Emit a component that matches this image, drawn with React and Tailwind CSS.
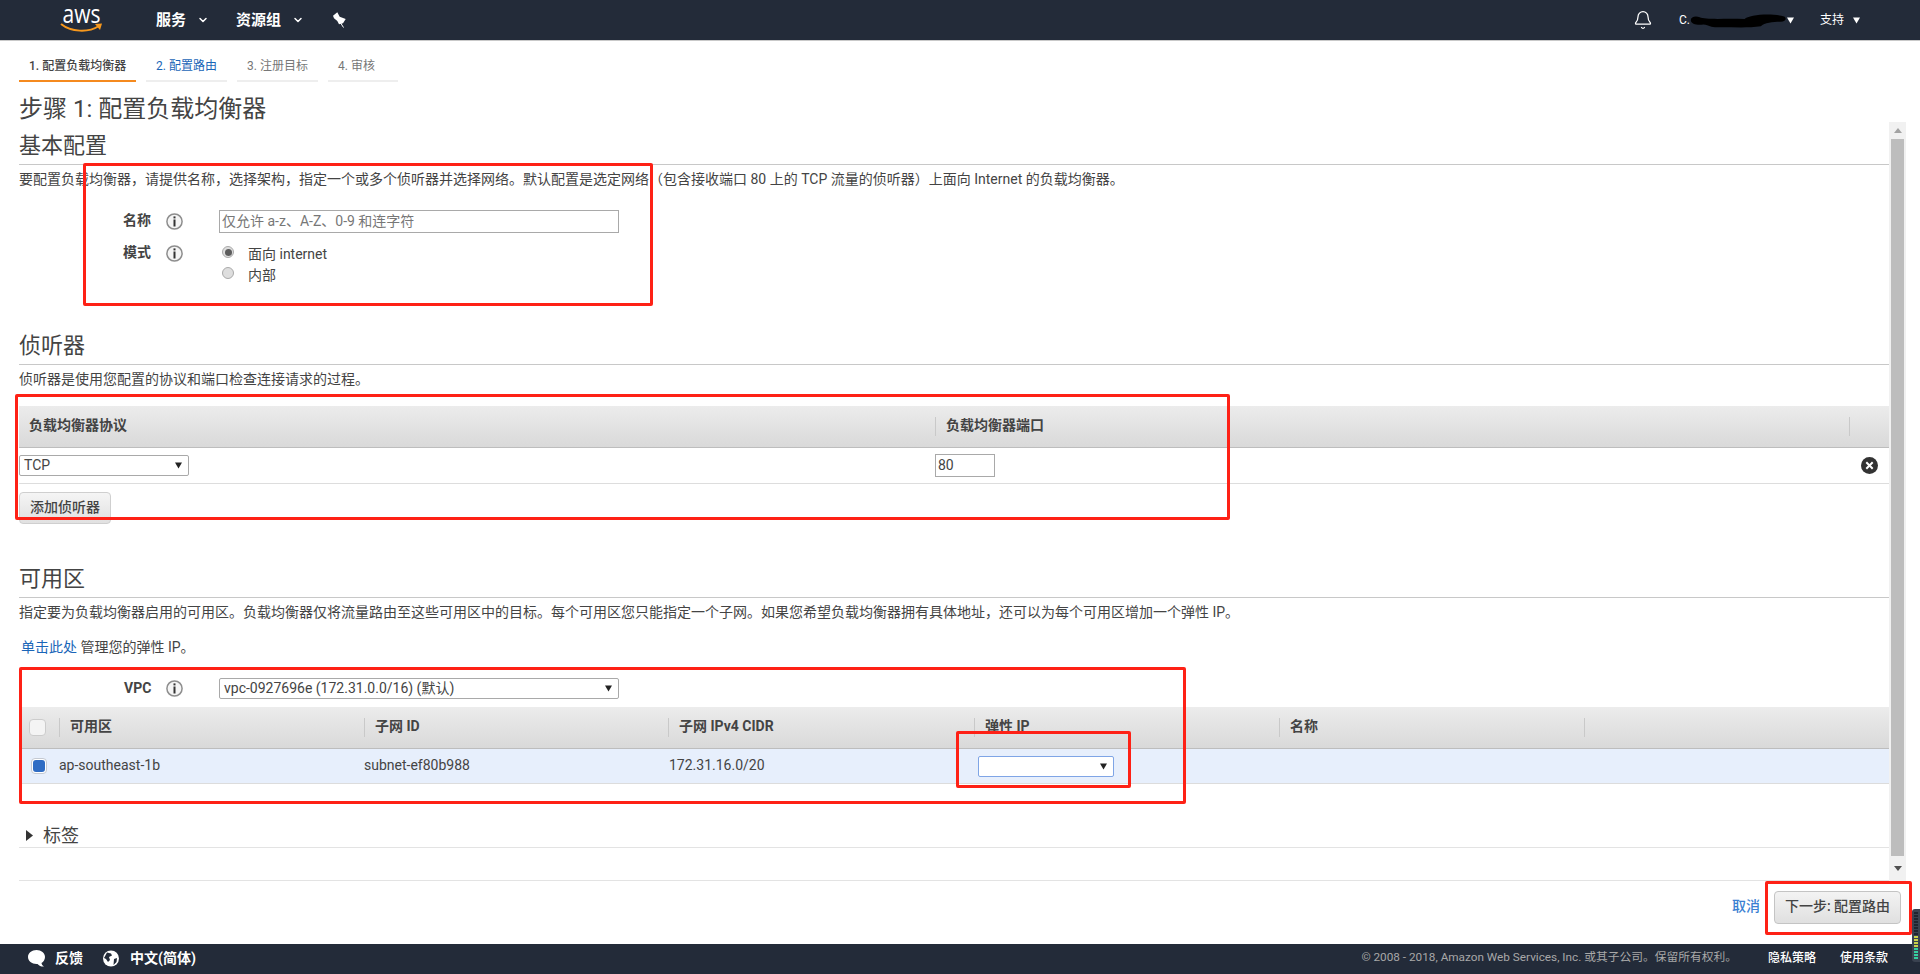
import React from 'react';
import { Bell, ChevronDown } from 'lucide-react';

const Caret = ({ className = '' }) => (
    <svg viewBox="0 0 8 7" className={`w-[7px] h-[7px] ${className}`}>
        <path d="M0 0h8L4 7z" fill="currentColor" />
    </svg>
);

const InfoIcon = () => (
    <svg viewBox="0 0 17 17" className="w-[17px] h-[17px] shrink-0">
        <circle cx="8.5" cy="8.5" r="7.6" fill="#f5f5f5" stroke="#8e8e8e" strokeWidth="1.5" />
        <rect x="7.5" y="3.4" width="2" height="2" fill="#333" />
        <rect x="7.5" y="6.5" width="2" height="7" fill="#333" />
    </svg>
);

const RemoveIcon = () => (
    <svg viewBox="0 0 17 17" className="w-[17px] h-[17px]">
        <circle cx="8.5" cy="8.5" r="8.5" fill="#333" />
        <path d="M5.3 5.3l6.4 6.4M11.7 5.3l-6.4 6.4" stroke="#fff" strokeWidth="2" />
    </svg>
);

const Radio = ({ checked }) => (
    <span className="-mt-[3px] w-[12px] h-[12px] rounded-full border border-[#aaaaaa] bg-[#dedede] flex items-center justify-center shrink-0">
        {checked && <span className="w-[7px] h-[7px] rounded-full bg-[#5c5c5c]" />}
    </span>
);

const Select = ({ className, children }) => (
    <div className={`flex items-center justify-between bg-white border border-[#a9a9a9] rounded-[2px] text-[14px] ${className}`}>
        <span>{children}</span>
        <Caret className="text-[#222] mr-[6px]" />
    </div>
);

const Sep = () => <span className="w-px h-[19px] bg-[#c9c9c9] shrink-0" />;

const HeadCell = ({ className, children }) => (
    <div className={`flex items-center gap-[10px] font-bold text-[14px] text-[#444] ${className}`}>
        {children}
    </div>
);

const HeadText = ({ children }) => <span className="-mt-[2px]">{children}</span>;

const SectionTitle = ({ className, children }) => (
    <h2 className={`text-[22px] leading-[30px] pb-[3px] border-b border-[#c8c8c8] text-[#444] ${className}`}>{children}</h2>
);

const Para = ({ className = '', children }) => (
    <p className={`mt-[4px] mb-[1px] text-[14px] leading-[20px] ${className}`}>{children}</p>
);

const steps = [
    { label: '1. 配置负载均衡器', w: 'w-[117px]', cls: 'border-[#f58a1f] text-[#444] font-medium' },
    { label: '2. 配置路由', w: 'w-[81px]', cls: 'border-[#eeeeee] text-[#1a66b8]' },
    { label: '3. 注册目标', w: 'w-[81px]', cls: 'border-[#eeeeee] text-[#777]' },
    { label: '4. 审核', w: 'w-[70px]', cls: 'border-[#eeeeee] text-[#777]' },
];

// red annotation boxes drawn over the screenshot
const marks = [
    'left-[83px] top-[163px] w-[570px] h-[143px]',
    'left-[15px] top-[394px] w-[1215px] h-[126px]',
    'left-[19px] top-[667px] w-[1167px] h-[137px]',
    'left-[956px] top-[731px] w-[175px] h-[57px]',
    'left-[1765px] top-[881px] w-[147px] h-[54px]',
];

const meter = [
    ...Array(8).fill('bg-[#1f2530]'),
    ...Array(4).fill('bg-[#c9d24a]'),
    ...Array(4).fill('bg-[#35cfa0]'),
];

export default function App() {
    return (
        <div className="relative h-[974px] overflow-hidden flex flex-col bg-white text-[#444] [font-family:Roboto,'Noto_Sans_CJK_SC',sans-serif]">
            {/* top bar */}
            <nav className="h-[41px] shrink-0 bg-[#232b39] border-b border-[#c9c9c9] flex items-center text-white">
                <div className="ml-[60px] w-[43px] h-[26px] flex flex-col items-center">
                    <span className="-mt-[4px] text-[21px] leading-[20px] scale-y-125 [font-family:'Open_Sans',sans-serif]">aws</span>
                    <svg viewBox="0 0 43 10" className="w-[43px] h-[10px]">
                        <path d="M1 1C11 9 28 10 39 3" fill="none" stroke="#f7981d" strokeWidth="2" />
                        <path d="M35 1l7-.5-2 6.500z" fill="#f7981d" />
                    </svg>
                </div>
                <span className="ml-[53px] text-[15px] font-bold">服务</span>
                <ChevronDown className="ml-[11px] w-[12px] h-[12px]" strokeWidth={3} />
                <span className="ml-[27px] text-[15px] font-bold">资源组</span>
                <ChevronDown className="ml-[11px] w-[12px] h-[12px]" strokeWidth={3} />
                <svg viewBox="13 7 15 16" className="ml-[28px] w-[15px] h-[16px]">
                    <path d="M14 10.700L18.300 7.300 20.700 11.700 26.700 14 24 18.300 20 19.300 18.300 16 15 13.300z" fill="#fff" />
                    <path d="M21 17l3.500 5.500" stroke="#fff" strokeWidth="1" />
                </svg>
                <Bell className="ml-auto w-[20px] h-[20px]" strokeWidth={1.5} />
                <span className="ml-[26px] w-[10px] text-[12px] text-white">C.</span>
                <svg viewBox="0 0 108 16" className="w-[97px] h-[16px]">
                    <path d="M2 8c0-4 6-5 10-3 6 3 30 1 50 2 4-5 30-7 44-3 3 2 2 6-4 6-8 0-18 1-22 5-14 2-30 1-44 1-12 1-12-2-20-3-6 1-14 0-14-5z" fill="#000" />
                </svg>
                <Caret className="ml-[1px]" />
                <span className="ml-[26px] text-[12px]">支持</span>
                <Caret className="ml-[9px] mr-[60px]" />
            </nav>

            {/* wizard steps */}
            <div className="mt-[11px] ml-[19px] flex gap-[10px] h-[30px] shrink-0">
                {steps.map((s) => (
                    <div key={s.label} className={`${s.w} ${s.cls} border-b-2 pl-[10px] text-[12px] leading-[28px]`}>{s.label}</div>
                ))}
            </div>

            <h1 className="mt-[14px] ml-[19px] h-[26px] shrink-0 text-[24px] leading-[26px] text-[#444]">步骤 1: 配置负载均衡器</h1>

            <div className="h-[759px] shrink-0 flex">
                <main className="flex-1 ml-[19px] border-b border-[#e3e3e3] flex flex-col">
                    {/* basic config */}
                    <SectionTitle className="mt-[9px]">基本配置</SectionTitle>
                    <Para>要配置负载均衡器，请提供名称，选择架构，指定一个或多个侦听器并选择网络。默认配置是选定网络（包含接收端口 80 上的 TCP 流量的侦听器）上面向 Internet 的负载均衡器。</Para>
                    <div className="mt-[20px] h-[23px] flex items-center">
                        <span className="ml-[104px] w-[43px] -mt-[2px] font-bold text-[14px]">名称</span>
                        <InfoIcon />
                        <input
                            placeholder="仅允许 a-z、A-Z、0-9 和连字符"
                            className="ml-[36px] w-[400px] h-[23px] border border-[#a9a9a9] px-[2px] pb-[2px] text-[14px] placeholder:text-[#777] outline-none"
                        />
                    </div>
                    <div className="mt-[10px] flex">
                        <span className="ml-[104px] w-[43px] h-[19px] flex items-center font-bold text-[14px]">模式</span>
                        <div className="h-[21px] flex items-center"><InfoIcon /></div>
                        <div className="ml-[39px] flex flex-col">
                            <label className="h-[21px] flex items-center gap-[14px] text-[14px]"><Radio checked /><span className="mt-[2px]">面向 internet</span></label>
                            <label className="h-[21px] flex items-center gap-[14px] text-[14px]"><Radio /><span className="mt-[2px]">内部</span></label>
                        </div>
                    </div>

                    {/* listeners */}
                    <SectionTitle className="mt-[46px]">侦听器</SectionTitle>
                    <Para>侦听器是使用您配置的协议和端口检查连接请求的过程。</Para>
                    <div className="mt-[16px] h-[42px] flex border-b border-[#bdbdbd] bg-gradient-to-b from-[#ececec] to-[#d9d9d9]">
                        <HeadCell className="w-[916px] pl-[10px]"><HeadText>负载均衡器协议</HeadText></HeadCell>
                        <HeadCell className="w-[914px]"><Sep /><HeadText>负载均衡器端口</HeadText></HeadCell>
                        <HeadCell className="flex-1"><Sep /></HeadCell>
                    </div>
                    <div className="h-[36px] flex items-center border-b border-[#dddddd]">
                        <Select className="w-[170px] h-[21px] pl-[4px]">TCP</Select>
                        <input defaultValue="80" className="ml-[746px] w-[60px] h-[23px] border border-[#a9a9a9] px-[2px] pb-[2px] text-[14px] outline-none" />
                        <span className="ml-auto mr-[11px] flex"><RemoveIcon /></span>
                    </div>
                    <button className="mt-[8px] w-[92px] h-[32px] shrink-0 rounded-[4px] border border-[#cfcfcf] bg-gradient-to-b from-[#f5f5f5] to-[#e1e1e1] pb-[2px] text-[14px] font-medium text-[#444]">添加侦听器</button>

                    {/* availability zones */}
                    <SectionTitle className="mt-[40px]">可用区</SectionTitle>
                    <Para>指定要为负载均衡器启用的可用区。负载均衡器仅将流量路由至这些可用区中的目标。每个可用区您只能指定一个子网。如果您希望负载均衡器拥有具体地址，还可以为每个可用区增加一个弹性 IP。</Para>
                    <p className="mt-[14px] mb-[1px] ml-[2px] text-[14px] leading-[20px]"><a className="text-[#1a66b8]">单击此处</a> 管理您的弹性 IP。</p>
                    <div className="mt-[20px] h-[21px] flex items-center">
                        <span className="ml-[105px] w-[42px] font-bold text-[14px]">VPC</span>
                        <InfoIcon />
                        <Select className="ml-[36px] w-[400px] h-[21px] pl-[4px]">vpc-0927696e (172.31.0.0/16) (默认)</Select>
                    </div>
                    <div className="mt-[8px] h-[42px] flex border-b border-[#bdbdbd] bg-gradient-to-b from-[#ececec] to-[#d9d9d9]">
                        <HeadCell className="w-[40px] pl-[10px]">
                            <span className="w-[17px] h-[17px] shrink-0 rounded-[4px] border border-[#cccccc] bg-[#f4f4f4]" />
                        </HeadCell>
                        <HeadCell className="w-[305px]"><Sep /><HeadText>可用区</HeadText></HeadCell>
                        <HeadCell className="w-[304px]"><Sep /><HeadText>子网 ID</HeadText></HeadCell>
                        <HeadCell className="w-[306px]"><Sep /><HeadText>子网 IPv4 CIDR</HeadText></HeadCell>
                        <HeadCell className="w-[305px]"><Sep /><HeadText>弹性 IP</HeadText></HeadCell>
                        <HeadCell className="w-[305px]"><Sep /><HeadText>名称</HeadText></HeadCell>
                        <HeadCell className="flex-1"><Sep /></HeadCell>
                    </div>
                    <div className="h-[35px] flex items-center border-b border-[#dcdcdc] bg-[#e7effc] text-[14px]">
                        <span className="ml-[12px] w-[16px] h-[16px] shrink-0 rounded-[4px] border border-[#c4c9d2] bg-white p-[1px] flex">
                            <span className="flex-1 rounded-[3px] bg-[#2f6cc4]" />
                        </span>
                        <span className="ml-[12px] w-[305px] -mt-[2px]">ap-southeast-1b</span>
                        <span className="w-[305px] -mt-[2px]">subnet-ef80b988</span>
                        <span className="w-[309px] -mt-[2px]">172.31.16.0/20</span>
                        <Select className="w-[136px] h-[21px] !border-[#7fa5e6]" />
                    </div>

                    {/* tags */}
                    <div className="mt-[40px] h-[24px] flex items-center border-b border-[#e3e3e3] text-[18px]">
                        <svg viewBox="0 0 7 11" className="ml-[7px] w-[7px] h-[11px]"><path d="M0 0l7 5.5L0 11z" fill="#333" /></svg>
                        <span className="ml-[10px]">标签</span>
                    </div>
                </main>

                {/* scrollbar */}
                <div className="w-[17px] mr-[14px] bg-[#f1f1f1] flex flex-col items-center">
                    <div className="h-[17px] flex items-center"><svg viewBox="0 0 8 5" className="w-[8px] h-[5px]"><path d="M0 5h8L4 0z" fill="#a3a3a3" /></svg></div>
                    <div className="w-[13px] flex-1 bg-[#bdbdbd]" />
                    <div className="h-[25px] flex items-center"><svg viewBox="0 0 8 5" className="w-[8px] h-[5px]"><path d="M0 0h8L4 5z" fill="#505050" /></svg></div>
                </div>
            </div>

            {/* actions */}
            <div className="h-[63px] shrink-0 pt-[10px] pr-[19px] flex justify-end gap-[14px]">
                <a className="h-[31px] flex items-center text-[14px] font-medium text-[#3a80d2]">取消</a>
                <button className="w-[127px] h-[33px] rounded-[4px] border border-[#c4c4c4] bg-gradient-to-b from-[#f3f3f3] to-[#e0e0e0] pb-[2px] text-[14px] font-medium text-[#444]">下一步: 配置路由</button>
            </div>

            {/* footer */}
            <footer className="h-[30px] shrink-0 bg-[#232b39] flex items-center text-white pb-[2px]">
                <svg viewBox="0 0 17 17" className="ml-[28px] w-[17px] h-[17px]">
                    <path d="M8.5 0C13.2 0 17 3 17 7c0 2.600-1.400 4.800-3.500 6 .2 1.400 1 2.600 2.500 3.500-2.600.2-5-.8-6.500-2.600-.3 0-.7.100-1 .1C3.800 14 0 11 0 7s3.800-7 8.500-7z" fill="#fff" />
                </svg>
                <span className="ml-[10px] text-[14px] font-bold">反馈</span>
                <svg viewBox="0 0 16 17" className="ml-[20px] w-[16px] h-[17px]">
                    <circle cx="8" cy="8.500" r="8" fill="#fff" />
                    <path d="M4 2.500l4 1 1 2-3 1.500 1 3-2 2-2-3-2-1zM11 9l3-1-.5 4-3 3z" fill="#232b39" />
                </svg>
                <span className="ml-[11px] text-[14px] font-bold">中文(简体)</span>
                <span className="ml-auto text-[11.75px] text-[#a8a8a8]">© 2008 - 2018, Amazon Web Services, Inc. 或其子公司。保留所有权利。</span>
                <span className="ml-[31px] text-[12px] font-medium">隐私策略</span>
                <span className="ml-[24px] mr-[32px] text-[12px] font-medium">使用条款</span>
            </footer>

            {/* tray meter at the window corner */}
            <div className="absolute right-0 top-[909px] w-[8px] h-[53px] rounded-l-[3px] bg-[#3a4250] flex flex-col gap-px pt-[3px] pl-[2px] pr-[2px]">
                {meter.map((c, i) => (
                    <span key={i} className={`h-[2px] shrink-0 ${c}`} />
                ))}
            </div>

            {marks.map((m) => (
                <div key={m} className={`absolute ${m} border-[3px] border-[#fe2116] rounded-[2px] pointer-events-none`} />
            ))}
        </div>
    );
}
